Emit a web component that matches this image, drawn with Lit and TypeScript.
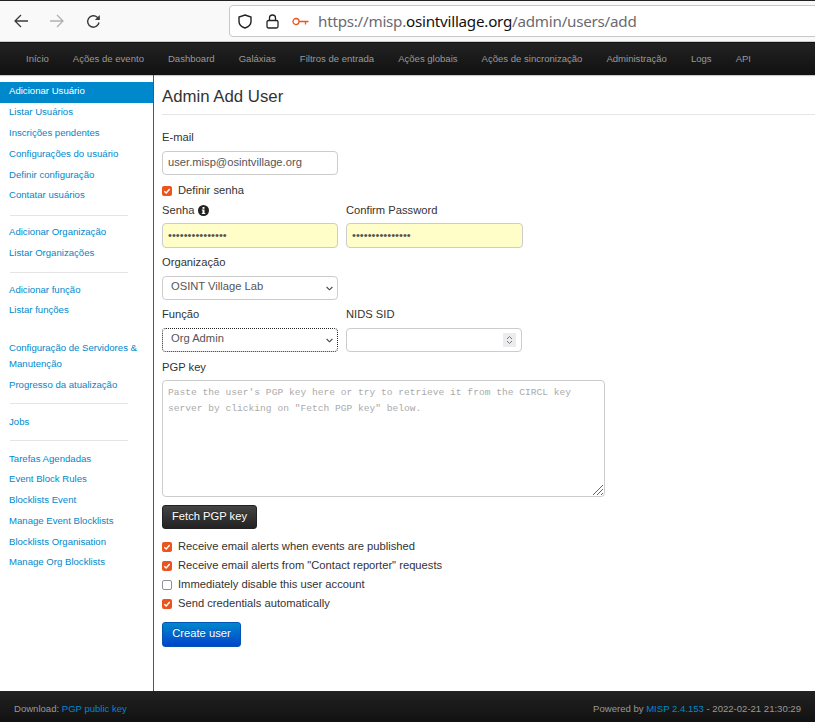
import { LitElement, html, css, svg } from 'lit';
import { customElement } from 'lit/decorators.js';

const NAV = [
	'Início',
	'Ações de evento',
	'Dashboard',
	'Galáxias',
	'Filtros de entrada',
	'Ações globais',
	'Ações de sincronização',
	'Administração',
	'Logs',
	'API',
];

// null = divider, '' = blank gap
const SIDE: (string | null)[] = [
	'Adicionar Usuário',
	'Listar Usuários',
	'Inscrições pendentes',
	'Configurações do usuário',
	'Definir configuração',
	'Contatar usuários',
	null,
	'Adicionar Organização',
	'Listar Organizações',
	null,
	'Adicionar função',
	'Listar funções',
	'',
	'Configuração de Servidores & Manutenção',
	'Progresso da atualização',
	null,
	'Jobs',
	null,
	'Tarefas Agendadas',
	'Event Block Rules',
	'Blocklists Event',
	'Manage Event Blocklists',
	'Blocklists Organisation',
	'Manage Org Blocklists',
];

const chevron = svg`<svg class="chev" width="7" height="5" viewBox="0 0 7 5"><path d="M.6 1l2.900 2.800L6.400 1" fill="none" stroke="#444" stroke-width="1.100"/></svg>`;

@customElement('app-root')
export class AppRoot extends LitElement {
	static styles = css`
		:host {
			display: flex;
			flex-direction: column;
			height: 722px;
			overflow: hidden;
			background: #fff;
			font-family: 'Liberation Sans', Arial, sans-serif;
			font-size: 11.2px;
			color: #333;
		}

		.browser {
			flex: none;
			height: 42px;
			box-sizing: border-box;
			border-top: 1px solid #222;
			border-bottom: 1px solid #ccc;
			background: #f9f9fa;
			display: flex;
			align-items: center;
			padding-left: 14px;
		}
		.tool {
			display: block;
			flex: none;
			margin-right: 22px;
		}
		.url {
			flex: 1;
			margin-left: 106px;
			margin-right: -10px;
			height: 32px;
			box-sizing: border-box;
			background: #fff;
			border: 1px solid #c8c8c8;
			border-radius: 4px;
			display: flex;
			align-items: center;
			padding-left: 8px;
		}
		.url svg {
			flex: none;
			display: block;
		}
		.url .lock {
			margin-left: 14px;
		}
		.url .key {
			margin-left: 13px;
		}
		.addr {
			margin-left: 9px;
			font-family: 'Noto Sans', 'Open Sans', sans-serif;
			font-size: 15.2px;
			letter-spacing: -0.24px;
			color: #6a6a70;
			white-space: nowrap;
		}
		.addr b {
			font-weight: 400;
			color: #111;
		}

		.nav {
			flex: none;
			height: 33px;
			box-sizing: border-box;
			padding: 0 0 2px 14px;
			display: flex;
			align-items: center;
			background: linear-gradient(#222222, #111111);
			border-top: 1px solid #111;
			box-shadow: 0 1px 1px rgba(0, 0, 0, 0.2);
		}
		.nav span {
			padding: 0 12px;
			font-size: 9.55px;
			color: #999;
			white-space: nowrap;
		}

		.body {
			flex: 1;
			display: flex;
			min-height: 0;
		}

		.side {
			flex: none;
			width: 153px;
			box-sizing: content-box;
			border-right: 1px solid #555;
			padding-top: 7px;
			font-size: 9.6px;
			line-height: 16px;
		}
		.side a {
			display: block;
			padding: 2.4px 9px;
			color: #0088cc;
		}
		.side a.up {
			padding: 1.4px 9px 3.4px;
		}
		.side a.active {
			background: #0088cc;
			color: #fff;
		}
		.side .div {
			height: 1px;
			margin: 8px 25px 7px 10px;
			background: #e5e5e5;
		}
		.side .gap {
			height: 16px;
		}

		.main {
			flex: 1;
			min-width: 0;
			padding-left: 8px;
		}
		h2 {
			margin: 0;
			height: 40px;
			box-sizing: border-box;
			border-bottom: 1px solid #e5e5e5;
			padding-top: 11px;
			font-size: 16.8px;
			font-weight: 400;
			line-height: 22px;
			color: #333;
		}
		form {
			display: block;
			margin: 0;
		}
		label,
		.label {
			display: flex;
			align-items: center;
			gap: 4px;
			height: 16px;
			line-height: 16px;
			color: #333;
		}
		.info {
			display: block;
		}
		.row {
			display: flex;
			gap: 8px;
		}
		.col {
			width: 176px;
		}
		.field {
			display: block;
			box-sizing: border-box;
			width: 176px;
			height: 24px;
			margin: 5px 0 0;
			padding: 0 5px 2px;
			border: 1px solid #ccc;
			border-radius: 4px;
			background: #fff;
			font: 11.2px 'Liberation Sans', Arial, sans-serif;
			color: #555;
			outline: none;
		}
		.pw {
			height: 25px;
			background: #fffdc8;
		}
		.wide {
			width: 177px;
		}
		.low {
			margin-top: 6px;
		}
		.select {
			display: flex;
			align-items: center;
			justify-content: space-between;
			padding: 0 4px 5px 8px;
		}
		.chev {
			display: block;
			margin-top: 6px;
		}
		.select.focus {
			border: 1px dotted #222;
		}
		.num {
			position: relative;
		}
		.spin {
			position: absolute;
			right: 6px;
			top: 27px;
			width: 13px;
			height: 14px;
			display: block;
		}
		.area {
			position: relative;
			width: 443px;
			margin-top: 5px;
		}
		textarea {
			display: block;
			box-sizing: border-box;
			width: 443px;
			height: 117px;
			margin: 0;
			padding: 4px 5px;
			border: 1px solid #ccc;
			border-radius: 4px;
			background: #fff;
			font: 9.6px/16px 'Liberation Mono', monospace;
			outline: none;
			resize: none;
		}
		textarea::placeholder {
			color: #aaa;
			opacity: 1;
		}
		.grip {
			position: absolute;
			right: 1px;
			bottom: 1px;
			display: block;
		}
		.btn {
			display: flex;
			align-items: center;
			justify-content: center;
			box-sizing: border-box;
			height: 24px;
			border-radius: 3px;
			font-size: 11.2px;
			color: #fff;
			text-shadow: 0 -1px 0 rgba(0, 0, 0, 0.25);
		}
		.fetch {
			width: 95px;
			margin-top: 8px;
			padding-bottom: 2px;
			background: linear-gradient(#444444, #222222);
			border: 1px solid #222;
		}
		.create {
			width: 79px;
			height: 25px;
			margin-top: 10px;
			padding-bottom: 4px;
			background: linear-gradient(#0088cc, #0044cc);
			border: 1px solid #0055b0;
		}
		.check {
			display: flex;
			align-items: center;
			gap: 6px;
			height: 19px;
			color: #333;
		}
		.box {
			flex: none;
			width: 10px;
			height: 10px;
			border-radius: 2px;
			background: #e9541f;
			display: flex;
			align-items: center;
			justify-content: center;
			margin-top: 2px;
		}
		.box.off {
			box-sizing: border-box;
			background: #fff;
			border: 1px solid #8f8f9d;
		}

		footer {
			flex: none;
			height: 31px;
			box-sizing: border-box;
			display: flex;
			align-items: center;
			justify-content: space-between;
			padding: 4px 14px 0;
			background: linear-gradient(#222222, #111111);
			font-size: 9.55px;
			color: #999;
		}
		footer a {
			color: #0088cc;
		}
	`;

	private check(text: string, on = true) {
		return html`<div class="check">
			<span class="box ${on ? '' : 'off'}">
				${on
					? svg`<svg width="8" height="8" viewBox="0 0 8 8"><path d="M1.300 4.200L3.200 6l3.500-4" fill="none" stroke="#fff" stroke-width="1.400"/></svg>`
					: ''}
			</span>
			<span>${text}</span>
		</div>`;
	}

	render() {
		return html`
			<div class="browser">
				<svg class="tool" width="14" height="14" viewBox="0 0 14 14"><path d="M14 7H1M7 1L1 7l6 6" fill="none" stroke="#3a3a3e" stroke-width="1.300"/></svg>
				<svg class="tool" width="14" height="14" viewBox="0 0 14 14"><path d="M0 7h13M7 1l6 6-6 6" fill="none" stroke="#b0b0b4" stroke-width="1.300"/></svg>
				<svg class="tool" width="15" height="15" viewBox="0 0 15 15"><path d="M13 8.500A5.700 5.700 0 1 1 11.300 3.300L13.200 5" fill="none" stroke="#3a3a3e" stroke-width="1.400"/><path d="M13.800 1v5h-5z" fill="#3a3a3e"/></svg>
				<div class="url">
					<svg width="14" height="15" viewBox="0 0 14 15"><path d="M7 1l6 2v4.500c0 3-2.500 5.300-6 6.500-3.500-1.200-6-3.500-6-6.500V3z" fill="none" stroke="#222" stroke-width="1.400"/></svg>
					<svg class="lock" width="13" height="15" viewBox="0 0 13 15"><rect x="1" y="6.500" width="11" height="7.500" rx="1.500" fill="none" stroke="#222" stroke-width="1.300"/><path d="M3.500 6.500V4a3 3 0 0 1 6 0v2.500" fill="none" stroke="#222" stroke-width="1.300"/></svg>
					<svg class="key" width="17" height="9" viewBox="0 0 17 9"><circle cx="4" cy="4.500" r="3" fill="none" stroke="#e9541f" stroke-width="1.300"/><path d="M7 4.500h9.500M13.500 4.500v3" fill="none" stroke="#e9541f" stroke-width="1.300"/></svg>
					<span class="addr">https://misp.<b>osintvillage.org</b>/admin/users/add</span>
				</div>
			</div>

			<div class="nav">${NAV.map((n) => html`<span>${n}</span>`)}</div>

			<div class="body">
				<div class="side">
					${SIDE.map((s, i) =>
						s === null
							? html`<div class="div"></div>`
							: s === ''
								? html`<div class="gap"></div>`
								: html`<a class="${i === 0 ? 'active' : ''} ${i < 12 ? 'up' : ''}">${s}</a>`,
					)}
				</div>

				<div class="main">
					<h2>Admin Add User</h2>
					<form>
						<label style="margin-top:14px">E-mail</label>
						<input class="field low" value="user.misp@osintvillage.org" />
						<div style="height:5px"></div>
						${this.check('Definir senha')}
						<div class="row" style="margin-top:3px">
							<div class="col">
								<div class="label">Senha
									<svg class="info" width="11" height="11" viewBox="0 0 11 11"><circle cx="5.500" cy="5.500" r="5.500" fill="#222"/><rect x="4.500" y="2" width="2" height="1.800" fill="#fff"/><path d="M3.800 4.600h2.700v3.300h.8v1H3.800v-1h.7V5.600h-.7z" fill="#fff"/></svg>
								</div>
								<input class="field pw" type="password" value="123456789012345" />
							</div>
							<div class="col">
								<div class="label">Confirm Password</div>
								<input class="field pw wide" type="password" value="123456789012345" />
							</div>
						</div>
						<label style="margin-top:6px">Organização</label>
						<div class="field select low">OSINT Village Lab ${chevron}</div>
						<div class="row" style="margin-top:6px">
							<div class="col">
								<div class="label">Função</div>
								<div class="field select focus low">Org Admin ${chevron}</div>
							</div>
							<div class="col num">
								<div class="label">NIDS SID</div>
								<div class="field low"></div>
								<svg class="spin" viewBox="0 0 13 14"><rect width="13" height="14" fill="#ececee"/><path d="M4 6l2.500-2.500L9 6M4 8l2.500 2.500L9 8" fill="none" stroke="#777" stroke-width="1"/></svg>
							</div>
						</div>
						<label style="margin-top:7px">PGP key</label>
						<div class="area">
							<textarea placeholder='Paste the user&#39;s PGP key here or try to retrieve it from the CIRCL key server by clicking on "Fetch PGP key" below.'></textarea>
							<svg class="grip" width="12" height="12" viewBox="0 0 12 12"><path d="M1 11L11 1M5 11l6-6M9 11l2-2" fill="none" stroke="#666" stroke-width="1"/></svg>
						</div>
						<div class="btn fetch">Fetch PGP key</div>
						<div style="height:7px"></div>
						${this.check('Receive email alerts when events are published')}
						${this.check('Receive email alerts from "Contact reporter" requests')}
						${this.check('Immediately disable this user account', false)}
						${this.check('Send credentials automatically')}
						<div class="btn create">Create user</div>
					</form>
				</div>
			</div>

			<footer>
				<span>Download: <a>PGP public key</a></span>
				<span>Powered by <a>MISP 2.4.153</a> - 2022-02-21 21:30:29</span>
			</footer>
		`;
	}
}

declare global {
	interface HTMLElementTagNameMap {
		'app-root': AppRoot;
	}
}
